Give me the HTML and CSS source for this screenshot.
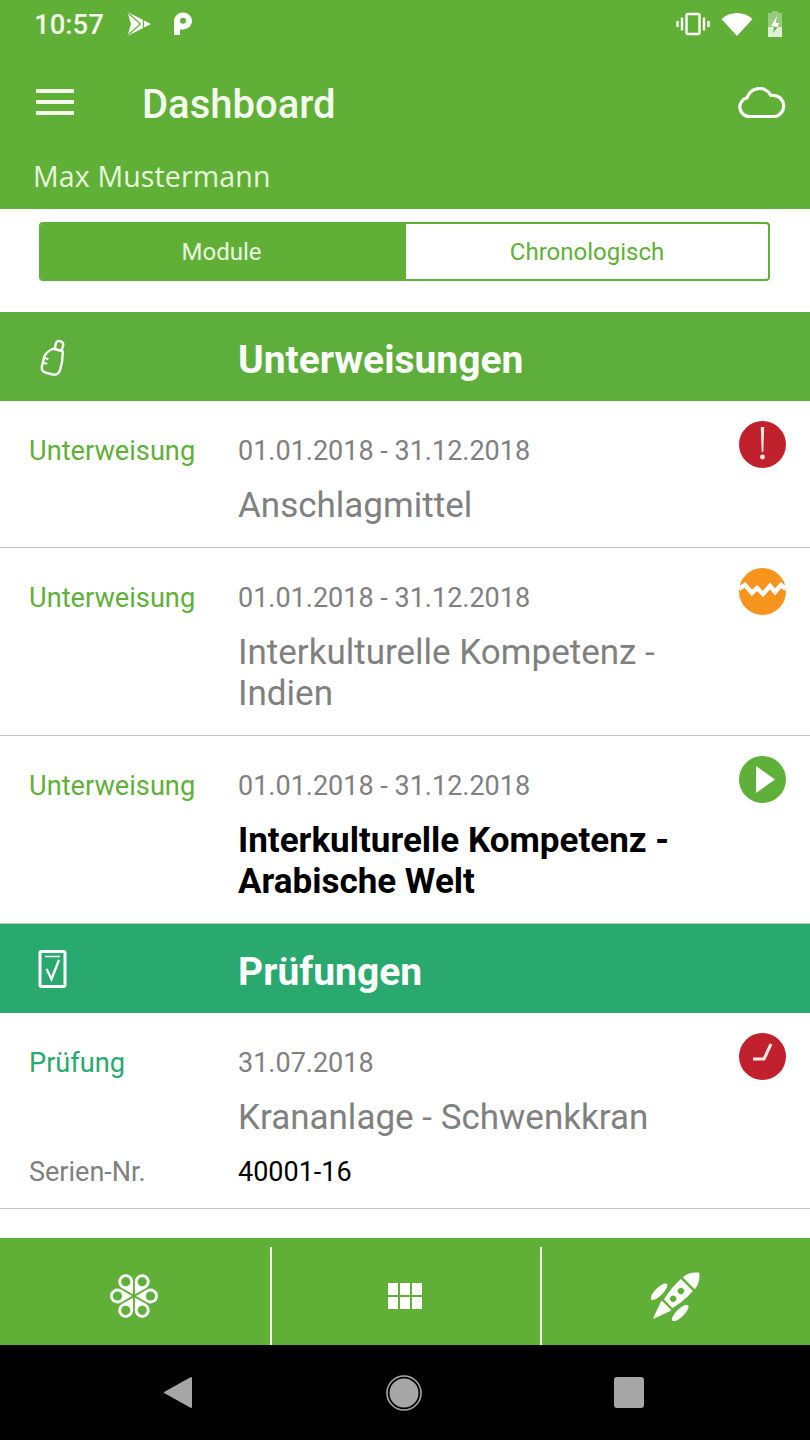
FILE: index.html
```html
<!DOCTYPE html>
<html lang="de">
<head>
  <meta charset="UTF-8" />
  <meta name="viewport" content="width=device-width, initial-scale=1.0"/>
  <title>Dashboard</title>
  <link rel="stylesheet" href="styles.css">
</head>
<body>
  <div id="main">
    <header class="top">
      <div class="statusbar">
        <span class="clock">10:57</span>
        <svg class="st-play" viewBox="0 0 24 24" width="24" height="24">
          <path d="M0.500 0 L24 12 L0.500 24 L4 12 Z" fill="#fff"/>
          <path d="M0.500 0.500 L13.500 12 L0.500 23.500" fill="none" stroke="#60b038" stroke-width="1.200"/>
          <path d="M16.500 7.500 L16.500 16.500" stroke="#60b038" stroke-width="1.200"/>
        </svg>
        <svg class="st-p" viewBox="0 0 20 24" width="20" height="24">
          <path d="M1 23 V9 A9 8.500 0 1 1 10 17.500 H7 V23 Z" fill="#fff"/>
          <circle cx="10" cy="8.800" r="3" fill="#60b038"/>
        </svg>
        <span class="spacer"></span>
        <svg class="st-vib" viewBox="0 0 34 24" width="34" height="24">
          <rect x="10.500" y="2" width="13" height="20" rx="1.500" fill="none" stroke="#fff" stroke-width="2.400"/>
          <path d="M1.500 9 V15 M6 5.500 V18.500 M28 5.500 V18.500 M32.500 9 V15" stroke="#fff" stroke-width="2.400"/>
        </svg>
        <svg class="st-wifi" viewBox="0 0 32 24" width="32" height="24">
          <path d="M0.500 7 A23 23 0 0 1 31.500 7 L16 24 Z" fill="#fff"/>
        </svg>
        <svg class="st-batt" viewBox="0 0 16 26" width="16" height="26">
          <path d="M5 0 H11 V2 H15 V26 H1 V2 H5 Z" fill="#fff" opacity="0.35"/>
          <path d="M1 16 H15 V26 H1 Z" fill="#fff" opacity="0.7"/>
          <path d="M10 5 L4 15 H7.500 L7.200 16 H10.600 L12 12 H8.500 Z" fill="#fff"/>
          <path d="M7.200 16 L6 22 L10.600 16 Z" fill="#60b038"/>
        </svg>
      </div>
      <div class="toolbar">
        <div class="burger"><span></span><span></span><span></span></div>
        <h1>Dashboard</h1>
        <svg class="cloud" viewBox="0 0 48 32" width="48" height="32">
          <path d="M11 30.500 A9.500 9.500 0 0 1 9 11.800 A13 13 0 0 1 33 9.500 A10.500 10.500 0 0 1 37 30.500 Z" fill="none" stroke="#fff" stroke-width="3.200"/>
        </svg>
      </div>
      <div class="username">Max Mustermann</div>
    </header>

    <div class="segment-wrap">
      <div class="segment">
        <div class="seg seg-on">Module</div>
        <div class="seg">Chronologisch</div>
      </div>
    </div>

    <section class="sec-head">
      <div class="sec-icon">
        <svg viewBox="0 0 30 38" width="30" height="38">
          <g transform="rotate(14 15 19)" fill="none" stroke="#fff" stroke-width="2.400" stroke-linejoin="round">
            <rect x="14.500" y="2" width="7.500" height="9" rx="3"/>
            <path d="M13 11 H23 C25 18 25.500 24 25 30 C24.500 34 22 36 19 36 H12 C8 36 6.500 33.500 6.500 30 V22 C6.500 17 9 14 13 11 Z"/>
            <path d="M6.500 22 H11 M6.500 27 H11" stroke-width="2"/>
          </g>
        </svg>
      </div>
      <h2>Unterweisungen</h2>
    </section>

    <div class="row">
      <div class="row-label">Unterweisung</div>
      <div class="row-body">
        <div class="row-date">01.01.2018 - 31.12.2018</div>
        <div class="row-title">Anschlagmittel</div>
      </div>
      <svg class="badge" viewBox="0 0 47 47" width="47" height="47">
        <circle cx="23.500" cy="23.500" r="23.500" fill="#c1202d"/>
        <path d="M21.800 6 H25.200 L24.300 31 H22.700 Z" fill="#fbe9e9"/>
        <circle cx="23.500" cy="36" r="2.400" fill="#fbe9e9"/>
      </svg>
    </div>

    <div class="row">
      <div class="row-label">Unterweisung</div>
      <div class="row-body">
        <div class="row-date">01.01.2018 - 31.12.2018</div>
        <div class="row-title">Interkulturelle Kompetenz - Indien</div>
      </div>
      <svg class="badge" viewBox="0 0 47 47" width="47" height="47">
        <circle cx="23.500" cy="23.500" r="23.500" fill="#f7941e"/>
        <path d="M0 21 L6 17 L13 25 L18 20 L24 26 L31 18 L36 24 L42 17 L47 21" fill="none" stroke="#fff" stroke-width="4.400"/>
      </svg>
    </div>

    <div class="row">
      <div class="row-label">Unterweisung</div>
      <div class="row-body">
        <div class="row-date">01.01.2018 - 31.12.2018</div>
        <div class="row-title row-title-new">Interkulturelle Kompetenz - Arabische Welt</div>
      </div>
      <svg class="badge" viewBox="0 0 47 47" width="47" height="47">
        <circle cx="23.500" cy="23.500" r="23.500" fill="#5fb038"/>
        <path d="M17 10 L36 23.500 L17 37 Z" fill="#fff"/>
      </svg>
    </div>

    <section class="sec-head sec-head-teal">
      <div class="sec-icon">
        <svg viewBox="0 0 30 38" width="30" height="38">
          <rect x="2" y="1.500" width="25" height="35" rx="1.500" fill="none" stroke="#fff" stroke-width="3"/>
          <path d="M7 6.500 H22" stroke="#fff" stroke-width="1.500"/>
          <path d="M8.500 19 L13.500 29 L21 10" fill="none" stroke="#fff" stroke-width="2.400"/>
        </svg>
      </div>
      <h2>Prüfungen</h2>
    </section>

    <div class="row row-exam">
      <div class="row-label">Prüfung</div>
      <div class="row-body">
        <div class="row-date">31.07.2018</div>
        <div class="row-title">Krananlage - Schwenkkran</div>
      </div>
      <svg class="badge" viewBox="0 0 47 47" width="47" height="47">
        <circle cx="23.500" cy="23.500" r="23.500" fill="#c1202d"/>
        <path d="M14 26 H25 L32 11" fill="none" stroke="#fbe9e9" stroke-width="3" stroke-linejoin="round"/>
      </svg>
      <div class="serial">
        <span class="serial-label">Serien-Nr.</span>
        <span class="serial-no">40001-16</span>
      </div>
    </div>

    <div class="filler"></div>

    <nav class="bottom">
      <div class="tab">
        <svg viewBox="-25 -25 50 50" width="50" height="50">
          <defs>
            <g id="petal">
              <path d="M2 0 L13 -6.500 A7.400 7.400 0 1 1 13 6.500 Z" fill="#fff"/>
              <circle cx="16.500" cy="0" r="4.600" fill="#5fb038"/>
            </g>
          </defs>
          <use href="#petal" transform="rotate(0)"/>
          <use href="#petal" transform="rotate(60)"/>
          <use href="#petal" transform="rotate(120)"/>
          <use href="#petal" transform="rotate(180)"/>
          <use href="#petal" transform="rotate(240)"/>
          <use href="#petal" transform="rotate(300)"/>
        </svg>
      </div>
      <div class="tab">
        <div class="grid-icon"><i></i><i></i><i></i><i></i><i></i><i></i></div>
      </div>
      <div class="tab">
        <svg viewBox="-25 -25 50 50" width="50" height="50">
          <g transform="rotate(45)" fill="#fff">
            <path d="M0 -33 C6 -28 8 -23 8.500 -18 H-8.500 C-8 -23 -6 -28 0 -33 Z"/>
            <path d="M-8.500 -15.500 H8.500 C9 -6 8 4 6 11 H-6 C-8 4 -9 -6 -8.500 -15.500 Z"/>
            <path d="M-6 14 H6 L0 31 Z" stroke="#fff" stroke-width="1.500" stroke-linejoin="round"/>
            <ellipse cx="-15" cy="9" rx="4" ry="11"/>
            <ellipse cx="15" cy="9" rx="4" ry="11"/>
            <circle cx="0" cy="-7" r="3.200" fill="#5fb038"/>
            <circle cx="0" cy="4" r="3.200" fill="#5fb038"/>
          </g>
        </svg>
      </div>
    </nav>

    <div class="sysnav">
      <svg viewBox="0 0 30 33" width="30" height="33">
        <path d="M28 2 V31 L2 16.500 Z" fill="#a6a6a6" stroke="#a6a6a6" stroke-width="2" stroke-linejoin="round"/>
      </svg>
      <svg viewBox="0 0 36 36" width="36" height="36">
        <circle cx="18" cy="18" r="17" fill="none" stroke="#a6a6a6" stroke-width="1.600"/>
        <circle cx="18" cy="18" r="14.500" fill="#a6a6a6"/>
      </svg>
      <div class="sys-square"></div>
    </div>
  </div>
</body>
</html>
```

FILE: styles.css
```css
html, body {
  margin: 0;
  padding: 0;
  background: #fff;
}

#main {
  width: 810px;
  height: 1440px;
  display: flex;
  flex-direction: column;
  overflow: hidden;
  font-family: Roboto, "Liberation Sans", sans-serif;
}

/* header */
.top {
  height: 209px;
  background: #60b038;
  color: #fff;
  flex: none;
}

.statusbar {
  height: 48px;
  display: flex;
  align-items: center;
  padding: 0 27px 0 34px;
}

.clock {
  font-size: 27.5px;
  font-weight: 500;
  width: 93px;
  color: #f2fbea;
}

.st-p {
  margin-left: 22px;
}

.spacer {
  flex: 1;
}

.st-wifi {
  margin-left: 11px;
}

.st-batt {
  margin-left: 14px;
}

.toolbar {
  height: 70px;
  margin-top: 21px;
  display: flex;
  align-items: center;
  padding: 0 24px 0 36px;
}

.burger {
  width: 38px;
  margin-top: -4px;
  display: flex;
  flex-direction: column;
  gap: 7px;
}

.burger span {
  display: block;
  height: 4px;
  background: #f4fbee;
}

h1 {
  margin: 0 0 0 68px;
  font-size: 40px;
  font-weight: 500;
  flex: 1;
  color: #f4fbee;
}

.cloud {
  margin-top: -5px;
}

.username {
  font-family: "Open Sans", sans-serif;
  font-size: 28.5px;
  letter-spacing: 0.15px;
  line-height: 38px;
  padding-left: 33px;
  margin-top: 18px;
  color: #e9f7df;
}

/* module / chronologisch switch */
.segment-wrap {
  flex: none;
  height: 103px;
  box-sizing: border-box;
  padding: 13px 40px 0 39px;
}

.segment {
  display: flex;
  height: 59px;
  box-sizing: border-box;
  border: 2px solid #60b038;
  border-radius: 4px;
  overflow: hidden;
}

.seg {
  flex: 1;
  display: flex;
  align-items: center;
  justify-content: center;
  font-size: 24px;
  color: #60b038;
}

.seg-on {
  flex: none;
  width: 365px;
  box-sizing: border-box;
  padding-right: 4px;
  background: #60b038;
  color: #eaf7e0;
}

/* section headers */
.sec-head {
  flex: none;
  height: 89px;
  display: flex;
  align-items: center;
  background: #5dae3a;
  color: #fff;
}

.sec-head-teal {
  background: #29a96e;
}

.sec-icon {
  width: 238px;
  box-sizing: border-box;
  padding-left: 38px;
  display: flex;
}

.sec-head h2 {
  margin: 7px 0 0;
  font-size: 39px;
  font-weight: 700;
}

/* list rows */
.row {
  flex: none;
  display: flex;
  flex-wrap: wrap;
  align-items: flex-start;
  box-sizing: border-box;
  padding: 30px 24px 21px 29px;
  border-bottom: 1px solid #c4c4c4;
}

.row-label {
  width: 209px;
  font-size: 27.2px;
  line-height: 40px;
  color: #5fb038;
}

.row-body {
  width: 501px;
}

.row-date {
  font-size: 27px;
  line-height: 40px;
  color: #808080;
}

.row-title {
  margin-top: 14px;
  font-size: 35px;
  line-height: 41px;
  color: #808080;
}

.row-title-new {
  font-weight: 700;
  color: #000;
}

.badge {
  margin-top: -10px;
}

.row-exam {
  padding-bottom: 16px;
}

.row-exam .row-label {
  color: #29a96e;
}

.serial {
  width: 100%;
  display: flex;
  margin-top: 14px;
  font-size: 27px;
  line-height: 40px;
}

.serial-label {
  width: 209px;
  color: #808080;
}

.serial-no {
  color: #000;
}

.filler {
  flex: 1;
}

/* bottom tabs */
.bottom {
  flex: none;
  height: 107px;
  box-sizing: border-box;
  padding-top: 9px;
  display: flex;
  background: #60b038;
}

.tab {
  width: 272px;
  box-sizing: border-box;
  border-right: 2px solid #f4fbee;
  display: flex;
  align-items: center;
  justify-content: center;
}

.tab:first-child svg {
  margin-right: 2px;
}

.tab:nth-child(2) {
  width: 270px;
}

.tab:last-child {
  flex: 1;
  border-right: none;
}

.grid-icon {
  display: grid;
  grid-template-columns: repeat(3, 10.5px);
  grid-auto-rows: 12.5px;
  gap: 1.5px;
  margin-right: 2px;
}

.grid-icon i {
  background: #fff;
}

/* android nav */
.sysnav {
  flex: none;
  height: 95px;
  background: #000;
  display: flex;
  align-items: center;
  justify-content: space-between;
  padding: 0 166px 0 163px;
}

.sys-square {
  width: 30px;
  height: 31px;
  border-radius: 3px;
  background: #a6a6a6;
}
```
